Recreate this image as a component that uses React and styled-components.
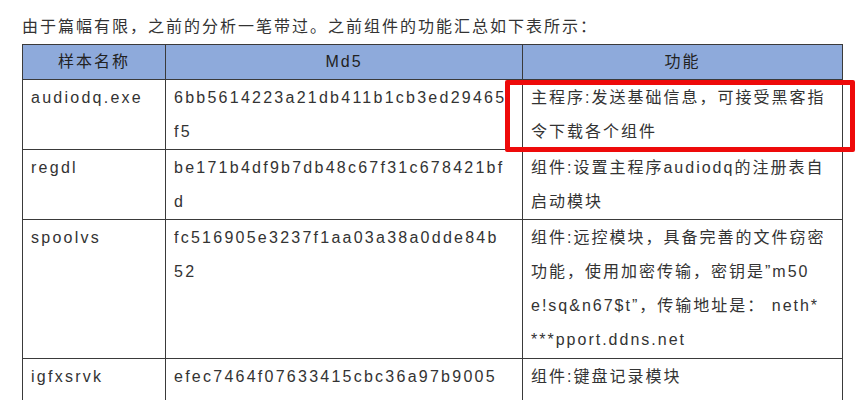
import React from "react";
import styled, { createGlobalStyle } from "styled-components";

const Global = createGlobalStyle`
  html, body { margin: 0; padding: 0; background: #fff; }
  body {
    font-family: "Liberation Sans", "Noto Sans CJK SC", sans-serif;
    color: #333;
  }
`;

const Page = styled.div`
  position: relative;
  padding: 10px 0 0 22px;
  font-size: 16px;
  letter-spacing: 2px;
`;

const Intro = styled.p`
  margin: 0;
  line-height: 34px;
  color: #333;
`;

const Table = styled.table`
  border-collapse: collapse;
  table-layout: fixed;
  width: 820px;
`;

const Col = styled.col`
  width: ${(p) => p.$w}px;
`;

const Head = styled.th`
  background: #8eaadb;
  border: 1px solid #3a3a3a;
  font-weight: normal;
  color: #222;
  text-align: center;
  line-height: 34px;
  padding: 0 8px;
`;

const Row = styled.tr`
  height: ${(p) => p.$h}px;
`;

const Cell = styled.td`
  border: 1px solid #3a3a3a;
  vertical-align: top;
  line-height: 34px;
  padding: 1px 8px 0 8px;
  white-space: nowrap;
  color: #333;
`;

const Mono = styled.span`
  letter-spacing: 2.25px;
`;

const Highlight = styled.div`
  position: absolute;
  left: 505px;
  top: 80px;
  width: 350px;
  height: 72px;
  box-sizing: border-box;
  border: 5px solid #ee0a0a;
  border-radius: 2px;
  pointer-events: none;
`;

const rows = [
  {
    name: "audiodq.exe",
    md5: ["6bb5614223a21db411b1cb3ed29465", "f5"],
    fn: ["主程序:发送基础信息，可接受黑客指", "令下载各个组件"],
    h: 70,
  },
  {
    name: "regdl",
    md5: ["be171b4df9b7db48c67f31c678421bf", "d"],
    fn: ["组件:设置主程序audiodq的注册表自", "启动模块"],
    h: 70,
  },
  {
    name: "spoolvs",
    md5: ["fc516905e3237f1aa03a38a0dde84b", "52"],
    fn: [
      "组件:远控模块，具备完善的文件窃密",
      "功能，使用加密传输，密钥是”m50",
      "e!sq&n67$t”，传输地址是： neth*",
      "***pport.ddns.net",
    ],
    h: 139,
  },
  {
    name: "igfxsrvk",
    md5: ["efec7464f07633415cbc36a97b9005"],
    fn: ["组件:键盘记录模块"],
    h: 70,
  },
];

const Lines = ({ items }) =>
  items.map((t, i) => (
    <React.Fragment key={i}>
      {i > 0 && <br />}
      {t}
    </React.Fragment>
  ));

export default function App() {
  return (
    <>
      <Global />
      <Page>
        <Intro>由于篇幅有限，之前的分析一笔带过。之前组件的功能汇总如下表所示：</Intro>
        <Table>
          <colgroup>
            <Col $w={143} />
            <Col $w={357} />
            <Col $w={320} />
          </colgroup>
          <thead>
            <tr>
              <Head>样本名称</Head>
              <Head>Md5</Head>
              <Head>功能</Head>
            </tr>
          </thead>
          <tbody>
            {rows.map((r) => (
              <Row key={r.name} $h={r.h}>
                <Cell>
                  <Mono>{r.name}</Mono>
                </Cell>
                <Cell>
                  <Mono>
                    <Lines items={r.md5} />
                  </Mono>
                </Cell>
                <Cell>
                  <Lines items={r.fn} />
                </Cell>
              </Row>
            ))}
          </tbody>
        </Table>
        <Highlight />
      </Page>
    </>
  );
}
